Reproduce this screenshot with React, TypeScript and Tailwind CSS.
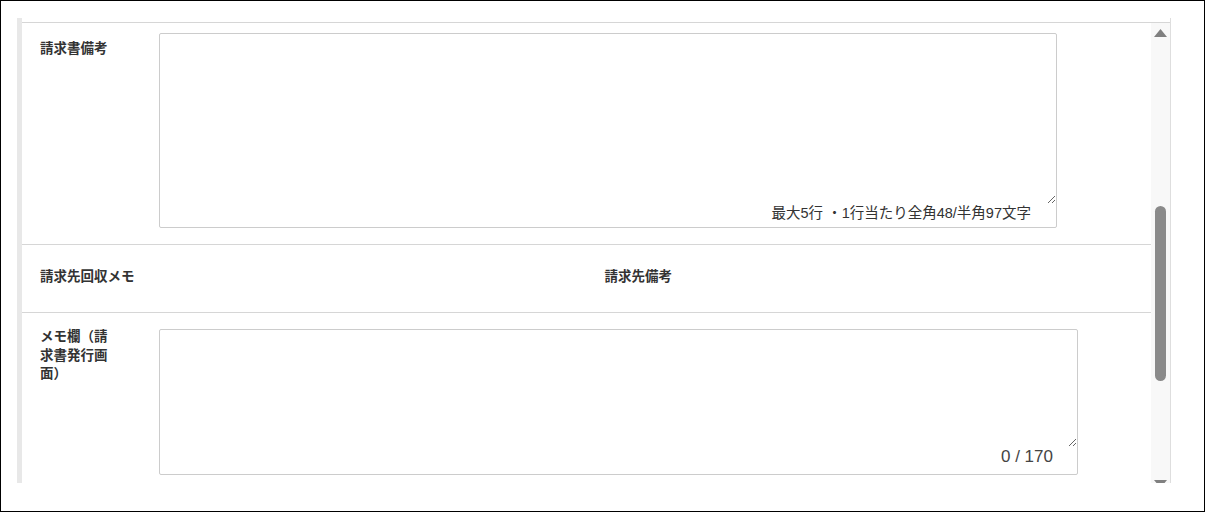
export default function App() {
  return (
    <div className="w-[1206px] h-[514px] bg-white font-['Liberation_Sans','Noto_Sans_CJK_JP',sans-serif] text-[#333]">
      <div className="w-[1205px] h-[512px] border border-black pt-[17px] pl-[16px] overflow-hidden">
        <div className="flex h-[465px] w-[1154px]">
          <div className="w-[5px] bg-[#e8e8e8]" />
          <div className="flex-1 flex flex-col border-r border-[#dedede] min-h-0">
            <div className="h-[4px] shrink-0" />
            <div className="flex flex-1 min-h-0 border-t border-[#d6d6d6]">
              <div className="w-[1129px] overflow-hidden">
                {/* Row 1 */}
                <div className="flex pt-[10px] pb-[16px] border-b border-[#d6d6d6]">
                  <div className="w-[137px] shrink-0 pl-[18px] pt-[7px]">
                    <div className="w-[76px] text-[13.5px] leading-[18px] font-bold">請求書備考</div>
                  </div>
                  <div className="w-[898px] h-[195px] border border-[#cccccc] rounded-[2px] flex flex-col">
                    <textarea className="flex-1 w-full outline-none bg-transparent px-2 py-1 text-[14px]" />
                    <div className="h-[23px] pr-[25px] pb-[3px] text-right text-[14.5px] leading-[18px] text-[#333]">
                      最大5行 ・1行当たり全角48/半角97文字
                    </div>
                  </div>
                </div>
                {/* Row 2 */}
                <div className="grid grid-cols-2 pt-[23px] pb-[26px] border-b border-[#d6d6d6]">
                  <div className="pl-[18px] text-[13.5px] leading-[18px] font-bold">請求先回収メモ</div>
                  <div className="pl-[18px] text-[13.5px] leading-[18px] font-bold">請求先備考</div>
                </div>
                {/* Row 3 */}
                <div className="flex pt-[16px]">
                  <div className="w-[137px] shrink-0 pl-[18px] -mt-[1px]">
                    <div className="w-[76px] text-[13.5px] leading-[18.5px] font-bold">メモ欄（請求書発行画面）</div>
                  </div>
                  <div className="w-[919px] h-[146px] border border-[#cccccc] rounded-[2px] flex flex-col">
                    <textarea className="flex-1 w-full outline-none bg-transparent px-2 py-1 text-[14px]" />
                    <div className="h-[27px] pr-[24px] pb-[4px] text-right text-[17px] leading-[20px] text-[#444]">
                      0 / 170
                    </div>
                  </div>
                </div>
              </div>
              <div className="w-[19px] bg-[#f8f8f8] flex flex-col items-center overflow-hidden">
                <svg width="13" height="8" viewBox="0 0 13 8" className="mt-[6px] shrink-0">
                  <polygon points="6.5,0 13,8 0,8" fill="#808080" />
                </svg>
                <div className="mt-[169px] h-[175px] w-[11px] rounded-full bg-[#8a8a8a] shrink-0" />
                <svg width="13" height="8" viewBox="0 0 13 8" className="mt-[99px] shrink-0">
                  <polygon points="0,0 13,0 6.5,8" fill="#808080" />
                </svg>
              </div>
            </div>
          </div>
        </div>
      </div>
    </div>
  );
}
